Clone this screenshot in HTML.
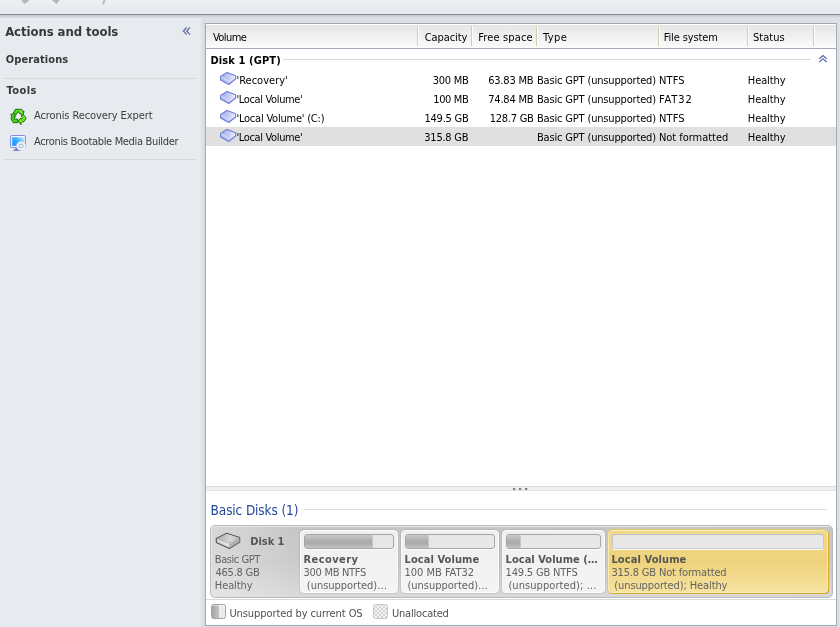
<!DOCTYPE html>
<html lang="en"><head><meta charset="utf-8"><title>Disk management</title>
<style>
html,body{margin:0;padding:0}
body{width:840px;height:627px;overflow:hidden;position:relative;background:#dde1e6;font-family:'DejaVu Sans Condensed','Liberation Sans',sans-serif;font-size:11px}
.a,.t,svg{position:absolute}
.t{white-space:nowrap;line-height:16px}
#toolbar{left:0;top:0;width:840px;height:14px;background:linear-gradient(#edeff3,#e4e7ec)}
#tbline{left:0;top:14px;width:840px;height:1px;background:#838b96}
#tbshadow{left:0;top:15px;width:840px;height:4px;background:linear-gradient(#c2c7cf,#d5d9e0 50%,#e2e5ea)}
#side{left:0;top:18px;width:201px;height:609px;background:#e7eaef}
#sideedge{left:200px;top:18px;width:5px;height:609px;background:linear-gradient(90deg,#e7eaef,#dde1e6 45%,#d7dbe0)}
.sep{left:4px;width:192px;height:1px;background:#d9d9d9}
#panel{left:205px;top:23px;width:630px;height:601px;border:1px solid #a0a8b5;background:#fff}
#hdr{left:206px;top:25px;width:630px;height:23px;background:linear-gradient(#e6e6e6,#f1f1f1 55%,#fcfcfc)}
#hdrline{left:206px;top:48px;width:630px;height:1px;background:#a4acba}
.cs{top:26px;width:1px;height:20px;background:#d3cdb4;box-shadow:1px 0 0 #fbfbfb}
.hl{height:1px;background:#dcdcdc}
#sel{left:206px;top:127px;width:630px;height:19px;background:#e0e0e0}
#split{left:206px;top:486px;width:630px;height:3px;background:#efefef;border-top:1px solid #dcdcdc;border-bottom:1px solid #e3e3e3}
.dot{top:488px;width:1px;height:2px;background:#757575;box-shadow:1px 0 0 #8e8e8e,2px 0 0 #c8c8c8}
#bar{left:210px;top:525px;width:621px;height:71px;border:1px solid #b9b9b9;border-radius:5px;background:linear-gradient(rgba(0,0,0,.02),rgba(255,255,255,0) 50%,rgba(255,255,255,.3)),linear-gradient(90deg,#dbdbdb,#d3d3d3 7%,#cacaca 14%,#c8c8c8);box-shadow:inset 1px 1px 0 #e9e9e9}
.pb{top:530px;height:61px;border:1px solid #fbfbfb;border-radius:4px;background:linear-gradient(#efefef,#f4f4f4);box-shadow:0 0 0 1px rgba(0,0,0,.07)}
.pb.sel{border-color:#f8ebb4;background:linear-gradient(#f0d98c,#efd27c 50%,#f6e3a0);box-shadow:1px 1px 0 0 #d9a82c,0 0 0 1px #e3c766}
.ub{top:534px;height:13px;border:1px solid #a6a6a6;border-radius:3px;background:#e8e8e8;overflow:hidden;box-shadow:0 1px 0 #fdfdfd}
.ub i{position:absolute;left:0;top:0;height:13px;background:linear-gradient(#c9c9c9,#aeaeae 45%,#a9a9a9 60%,#c4c4c4);border-right:1px dotted #d8d8d8}
.lg{top:604px;width:13px;height:13px;border:1px solid #a2a2a2;border-radius:2.5px;overflow:hidden;box-shadow:inset 0 1px 0 rgba(255,255,255,.5)}
</style></head><body>
<div class="a" id="toolbar"></div>
<svg width="840" height="14" style="left:0;top:0" viewBox="0 0 840 14"><g fill="#b3b6bc"><polygon points="21.4,1 22.8,0 29.6,0 24.8,3.9"/><polygon points="52,0 59,0 59.2,1.1 56.3,3.9"/><polygon points="102.2,4.6 103.9,4.6 105.4,0 103.5,0"/></g><rect x="86" y="0" width="1" height="5" fill="#e4e7eb"/></svg>
<div class="a" id="tbline"></div><div class="a" id="tbshadow"></div>
<div class="a" id="side"></div><div class="a" id="sideedge"></div>
<div class="a sep" style="top:78px"></div><div class="a sep" style="top:159px"></div>
<svg width="10" height="10" style="left:182px;top:26px" viewBox="182 26 10 10"><g fill="none" stroke="#5f6ea1" stroke-width="1.3"><path d="M186.6 27.4L183.4 31L186.6 34.6"/><path d="M189.9 27.4L186.7 31L189.9 34.6"/></g></svg>
<!-- recycle icon -->
<svg width="20" height="20" style="left:8px;top:106px" viewBox="0 0 20 20">
<polygon points="6.4,7 13.4,7 9.8,13.8" fill="#f6f8fa"/>
<g stroke="#16721a" stroke-width="1" stroke-linejoin="round">
<path d="M5.4 7.2L7.3 3.3H13.5L14.7 5.5L16 4.9L15.3 8.7L11.5 7.7L12.8 6.9L12 6.2H9.5L8.4 8.6Z" fill="#55e012"/>
<path d="M2.7 8.7L5.7 7.3L7.9 10.7L6.5 10.5L6.1 13.1H9.7V16.7H5.2L3 12.9L3.8 10.1Z" fill="#4ad60e"/>
<path d="M15 8.5L17.8 11.3V13L15.5 16H12.9L13 18.8L10.3 15L12.9 11.9L12.9 12.8H13.9L14.7 11.5L13.1 9.7Z" fill="#66e412"/>
</g>
<path d="M11.4 4.3H13L14.3 6.6L12.9 7.2Z" fill="#b6f21c"/><path d="M11.6 14.6L12.4 13.6L12.5 15H14.8L13.6 16H12.2Z" fill="#a8f01a"/><path d="M6.2 4.8L7.8 4.3L7 6.6Z" fill="#2aa60e"/><path d="M15.2 10L16.8 11.6V12.8L15.8 13.4Z" fill="#8aec16"/>
</svg>
<!-- monitor icon -->
<svg width="18" height="18" style="left:9px;top:134px" viewBox="9 134 18 18">
<defs><linearGradient id="scr" x1="0" y1="1" x2="1" y2="0"><stop offset="0" stop-color="#0a8cff"/><stop offset=".55" stop-color="#3fb2ff"/><stop offset="1" stop-color="#c8f0ff"/></linearGradient></defs>
<rect x="10.6" y="135.5" width="14.8" height="12" rx="1.8" fill="#fdfdff" stroke="#838edb" stroke-width="1.1"/>
<rect x="12.2" y="137.1" width="11.6" height="8.8" fill="url(#scr)"/>
<path d="M15.4 148H18.6V149.4H21V150.9H13.4V149.6L15.4 149.2Z" fill="#7682d6"/>
<circle cx="21.1" cy="146" r="4.5" fill="#f3f6fa" stroke="#cfd6e6" stroke-width=".7"/><circle cx="21.1" cy="146" r="2" fill="#eef4f6" stroke="#8aa4b4" stroke-width=".9"/><circle cx="21.1" cy="146" r=".8" fill="#fff"/>
</svg>
<div class="a" id="panel"></div>
<div class="a" id="hdr"></div><div class="a" id="hdrline"></div>
<div class="a cs" style="left:417px"></div><div class="a cs" style="left:471px"></div><div class="a cs" style="left:536px"></div><div class="a cs" style="left:658px"></div><div class="a cs" style="left:747px"></div><div class="a cs" style="left:813px"></div>
<div class="a hl" style="left:283px;top:59px;width:528px"></div>
<svg width="12" height="10" style="left:817px;top:53px" viewBox="817 53 12 10"><g fill="none" stroke="#5f6ea1" stroke-width="1.25"><path d="M819.3 58.8L823 55.6L826.7 58.8"/><path d="M819.3 62L823 58.8L826.7 62"/></g></svg>
<div class="a" id="sel"></div>
<svg width="17" height="14" style="left:220px;top:72px"><defs><linearGradient id="vg" x1="0" y1="0" x2="1" y2="0"><stop offset="0" stop-color="#9facf0"/><stop offset=".55" stop-color="#c3ccf6"/><stop offset="1" stop-color="#eef1fd"/></linearGradient></defs><polygon points="0.6,4.4 7,0.5 15.6,3.8 15.6,7 8.8,12.5 0.6,8" fill="url(#vg)" stroke="#727cd6" stroke-width="1.15" stroke-linejoin="round"/><path d="M1 4.9L8.8 9.3L15.2 4.3" fill="none" stroke="#dfe4fb" stroke-width=".9"/><rect x="1.8" y="6.3" width="1.4" height="1" fill="#a6e2c4"/></svg>
<svg width="17" height="14" style="left:220px;top:91px"><polygon points="0.6,4.4 7,0.5 15.6,3.8 15.6,7 8.8,12.5 0.6,8" fill="url(#vg)" stroke="#727cd6" stroke-width="1.15" stroke-linejoin="round"/><path d="M1 4.9L8.8 9.3L15.2 4.3" fill="none" stroke="#dfe4fb" stroke-width=".9"/><rect x="1.8" y="6.3" width="1.4" height="1" fill="#a6e2c4"/></svg>
<svg width="17" height="14" style="left:220px;top:110px"><polygon points="0.6,4.4 7,0.5 15.6,3.8 15.6,7 8.8,12.5 0.6,8" fill="url(#vg)" stroke="#727cd6" stroke-width="1.15" stroke-linejoin="round"/><path d="M1 4.9L8.8 9.3L15.2 4.3" fill="none" stroke="#dfe4fb" stroke-width=".9"/><rect x="1.8" y="6.3" width="1.4" height="1" fill="#a6e2c4"/></svg>
<svg width="17" height="14" style="left:220px;top:129px"><polygon points="0.6,4.4 7,0.5 15.6,3.8 15.6,7 8.8,12.5 0.6,8" fill="url(#vg)" stroke="#727cd6" stroke-width="1.15" stroke-linejoin="round"/><path d="M1 4.9L8.8 9.3L15.2 4.3" fill="none" stroke="#dfe4fb" stroke-width=".9"/><rect x="1.8" y="6.3" width="1.4" height="1" fill="#a6e2c4"/></svg>
<div class="a" id="split"></div>
<div class="a dot" style="left:513px"></div><div class="a dot" style="left:519px"></div><div class="a dot" style="left:525px"></div>
<div class="a hl" style="left:303px;top:509px;width:524px"></div>
<div class="a" id="bar"></div>
<svg width="26" height="18" style="left:215px;top:532px" viewBox="215 532 26 18"><defs><linearGradient id="dg" x1="0" y1="0" x2="1" y2="0"><stop offset="0" stop-color="#a8a8a8"/><stop offset=".6" stop-color="#d6d6d6"/><stop offset="1" stop-color="#bcbcbc"/></linearGradient><linearGradient id="dg2" x1="0" y1="0" x2="1" y2="0"><stop offset="0" stop-color="#c4c4c4"/><stop offset=".5" stop-color="#dedede"/><stop offset="1" stop-color="#9c9c9c"/></linearGradient></defs>
<polygon points="216.3,538.6 226.6,533.3 239.7,537.6 239.7,542 229.4,548.5 216.3,542.4" fill="url(#dg2)" stroke="#55555e" stroke-width="1.1" stroke-linejoin="round"/>
<polygon points="217,538.7 226.6,533.9 239,537.8 229.3,543.9" fill="url(#dg)"/>
<path d="M229.4 544.3L239.4 538.2V541.8L229.4 548Z" fill="#b0b0b0"/>
<path d="M217.6 540.8L228.4 545.5" fill="none" stroke="#f0f0f0" stroke-width=".8"/><rect x="229.4" y="542" width="1.2" height="1" fill="#777"/></svg>
<div class="a pb" style="left:300px;width:96px"></div>
<div class="a pb" style="left:401px;width:96px"></div>
<div class="a pb" style="left:502px;width:101px"></div>
<div class="a pb sel" style="left:608px;width:218px"></div>
<div class="a ub" style="left:304px;width:88px"><i style="width:67px"></i></div>
<div class="a ub" style="left:405px;width:88px"><i style="width:22px"></i></div>
<div class="a ub" style="left:506px;width:93px"><i style="width:13px"></i></div>
<div class="a ub" style="left:612px;width:210px;border-color:#bfbfc4 #c6c6ca #cdcdd0"></div>
<div class="a hl" style="left:206px;top:599px;width:630px;background:#d9d9d9"></div>
<div class="a lg" style="left:211px;background:linear-gradient(90deg,#a4a4a4,#c4c4c4 52%,#ebebeb 52%)"></div>
<div class="a lg" style="left:373px;background:#f5f5f5;border-color:#c6c6c6;box-shadow:none"><svg width="13" height="13" style="left:0;top:0"><defs><pattern id="chk" x="1" y="1" width="4" height="4" patternUnits="userSpaceOnUse"><rect width="2" height="2" fill="#d3d3d3"/><rect x="2" y="2" width="2" height="2" fill="#d3d3d3"/></pattern></defs><rect width="13" height="13" fill="url(#chk)"/></svg></div>
<div class="a" id="txt" style="left:0;top:0;width:840px;height:627px;will-change:transform">
<div class="t" style="left:5.15px;top:24px;font-size:13px;color:#383838;font-weight:bold;letter-spacing:-0.07px;">Actions and tools</div>
<div class="t" style="left:5.74px;top:52px;color:#383838;font-weight:bold;letter-spacing:0.10px;">Operations</div>
<div class="t" style="left:6.40px;top:83px;color:#383838;font-weight:bold;letter-spacing:0.46px;">Tools</div>
<div class="t" style="left:33.94px;top:108px;color:#3c3c3c;letter-spacing:-0.09px;">Acronis Recovery Expert</div>
<div class="t" style="left:33.94px;top:134px;color:#3c3c3c;letter-spacing:-0.33px;">Acronis Bootable Media Builder</div>
<div class="t" style="left:212.94px;top:30px;letter-spacing:-0.57px;">Volume</div>
<div class="t" style="left:424.76px;top:30px;letter-spacing:-0.08px;">Capacity</div>
<div class="t" style="left:478.30px;top:30px;letter-spacing:0.13px;">Free space</div>
<div class="t" style="left:543.00px;top:30px;letter-spacing:0.41px;">Type</div>
<div class="t" style="left:663.70px;top:30px;letter-spacing:-0.12px;">File system</div>
<div class="t" style="left:752.97px;top:30px;letter-spacing:0.02px;">Status</div>
<div class="t" style="left:210.50px;top:53px;font-weight:bold;letter-spacing:0.11px;">Disk 1 (GPT)</div>
<div class="t" style="left:236.44px;top:73px;letter-spacing:0.01px;">'Recovery'</div>
<div class="t" style="left:432.80px;top:73px;letter-spacing:-0.26px;">300 MB</div>
<div class="t" style="left:488.13px;top:73px;letter-spacing:-0.18px;">63.83 MB</div>
<div class="t" style="left:537.00px;top:73px;letter-spacing:-0.17px;">Basic GPT (unsupported)</div>
<div class="t" style="left:659.00px;top:73px;letter-spacing:0.12px;">NTFS</div>
<div class="t" style="left:747.80px;top:73px;letter-spacing:-0.10px;">Healthy</div>
<div class="t" style="left:236.44px;top:92px;letter-spacing:-0.35px;">'Local Volume'</div>
<div class="t" style="left:433.25px;top:92px;letter-spacing:-0.38px;">100 MB</div>
<div class="t" style="left:488.24px;top:92px;letter-spacing:-0.21px;">74.84 MB</div>
<div class="t" style="left:537.00px;top:92px;letter-spacing:-0.17px;">Basic GPT (unsupported)</div>
<div class="t" style="left:659.00px;top:92px;letter-spacing:0.87px;">FAT32</div>
<div class="t" style="left:747.80px;top:92px;letter-spacing:-0.10px;">Healthy</div>
<div class="t" style="left:236.44px;top:111px;letter-spacing:-0.22px;">'Local Volume' (C:)</div>
<div class="t" style="left:424.45px;top:111px;letter-spacing:-0.23px;">149.5 GB</div>
<div class="t" style="left:489.65px;top:111px;letter-spacing:-0.24px;">128.7 GB</div>
<div class="t" style="left:537.00px;top:111px;letter-spacing:-0.17px;">Basic GPT (unsupported)</div>
<div class="t" style="left:659.00px;top:111px;letter-spacing:0.12px;">NTFS</div>
<div class="t" style="left:747.80px;top:111px;letter-spacing:-0.10px;">Healthy</div>
<div class="t" style="left:236.44px;top:130px;letter-spacing:-0.35px;">'Local Volume'</div>
<div class="t" style="left:424.30px;top:130px;letter-spacing:-0.24px;">315.8 GB</div>
<div class="t" style="left:537.00px;top:130px;letter-spacing:-0.17px;">Basic GPT (unsupported)</div>
<div class="t" style="left:659.00px;top:130px;letter-spacing:-0.04px;">Not formatted</div>
<div class="t" style="left:747.80px;top:130px;letter-spacing:-0.10px;">Healthy</div>
<div class="t" style="left:210.60px;top:502px;font-size:13.5px;color:#24479a;letter-spacing:-0.12px;">Basic Disks (1)</div>
<div class="t" style="left:250.20px;top:534px;color:#555;font-weight:bold;letter-spacing:-0.02px;">Disk 1</div>
<div class="t" style="left:214.80px;top:552px;color:#626262;letter-spacing:-0.45px;">Basic GPT</div>
<div class="t" style="left:215.45px;top:565px;color:#626262;letter-spacing:-0.22px;">465.8 GB</div>
<div class="t" style="left:214.80px;top:578px;color:#626262;letter-spacing:-0.10px;">Healthy</div>
<div class="t" style="left:303.60px;top:552px;color:#555;font-weight:bold;letter-spacing:0.40px;">Recovery</div>
<div class="t" style="left:303.60px;top:565px;color:#626262;letter-spacing:-0.30px;">300 MB NTFS</div>
<div class="t" style="left:306.80px;top:578px;color:#626262;letter-spacing:-0.02px;">(unsupported)…</div>
<div class="t" style="left:404.50px;top:552px;color:#555;font-weight:bold;letter-spacing:0.08px;">Local Volume</div>
<div class="t" style="left:404.45px;top:565px;color:#626262;">100 MB FAT32</div>
<div class="t" style="left:407.40px;top:578px;color:#626262;">(unsupported)…</div>
<div class="t" style="left:505.60px;top:552px;color:#555;font-weight:bold;letter-spacing:0.03px;">Local Volume (…</div>
<div class="t" style="left:505.55px;top:565px;color:#626262;letter-spacing:-0.18px;">149.5 GB NTFS</div>
<div class="t" style="left:508.40px;top:578px;color:#626262;letter-spacing:0.07px;">(unsupported); …</div>
<div class="t" style="left:611.40px;top:552px;color:#555;font-weight:bold;letter-spacing:0.10px;">Local Volume</div>
<div class="t" style="left:611.40px;top:565px;color:#626262;letter-spacing:-0.17px;">315.8 GB Not formatted</div>
<div class="t" style="left:614.30px;top:578px;color:#626262;letter-spacing:-0.11px;">(unsupported); Healthy</div>
<div class="t" style="left:229.40px;top:606px;color:#505050;letter-spacing:-0.08px;">Unsupported by current OS</div>
<div class="t" style="left:392.00px;top:606px;color:#505050;letter-spacing:-0.20px;">Unallocated</div>
</div>
</body></html>
